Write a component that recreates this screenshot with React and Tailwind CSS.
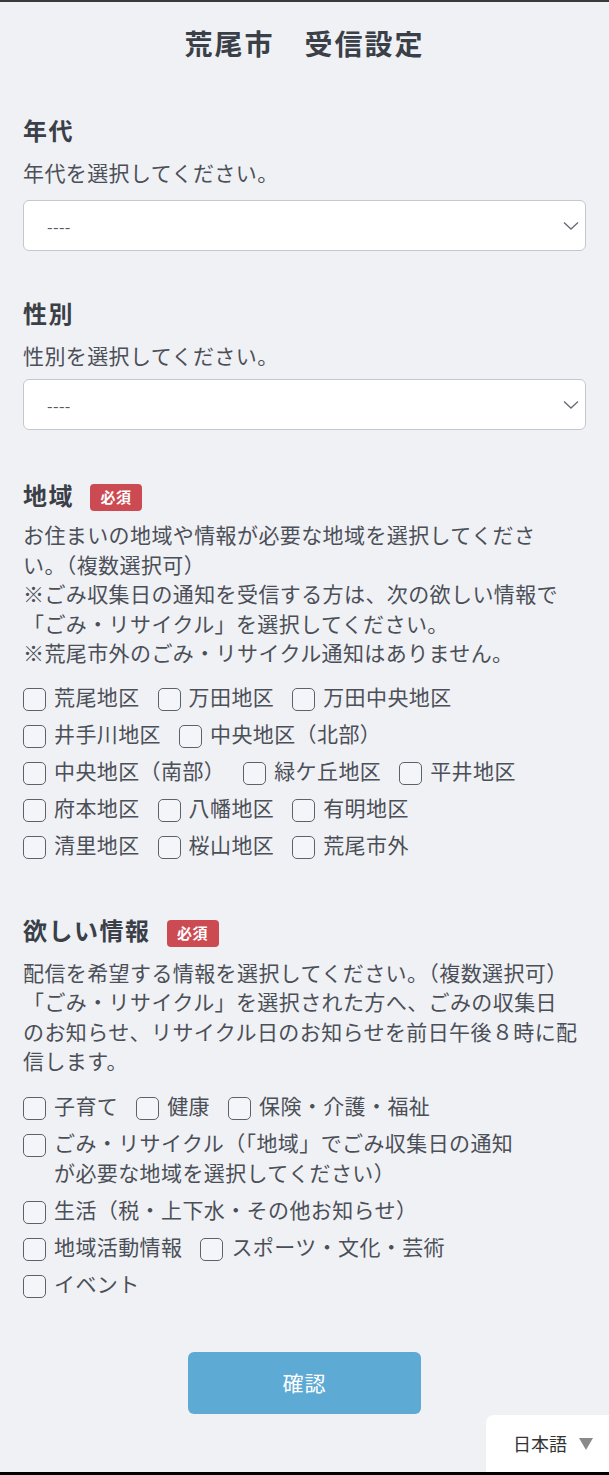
import React from "react";

const FONT = { fontFamily: '"Noto Sans CJK JP", "Noto Sans", sans-serif' };

const AREAS = [
  ["荒尾地区", "万田地区", "万田中央地区"],
  ["井手川地区", "中央地区（北部）"],
  ["中央地区（南部）", "緑ケ丘地区", "平井地区"],
  ["府本地区", "八幡地区", "有明地区"],
  ["清里地区", "桜山地区", "荒尾市外"],
];

const INFOS = [
  [["子育て"], ["健康"], ["保険・介護・福祉"]],
  [["ごみ・リサイクル（「地域」でごみ収集日の通知", "が必要な地域を選択してください）"]],
  [["生活（税・上下水・その他お知らせ）"]],
  [["地域活動情報"], ["スポーツ・文化・芸術"]],
  [["イベント"]],
];

const Checkbox = () => (
  <span className="mt-[7px] block h-[23px] w-[23px] shrink-0 rounded-[5px] border-[1.5px] border-[#5d626a] bg-[#f4f5f8]" />
);

const CheckItem = ({ lines }) => (
  <label className="mr-[18px] flex items-start">
    <Checkbox />
    <span className="ml-[8px] leading-[30px]">
      {lines.map((l, i) => (
        <React.Fragment key={i}>
          {i > 0 && <br />}
          {l}
        </React.Fragment>
      ))}
    </span>
  </label>
);

const Heading = ({ children, required, className = "" }) => (
  <div className={`flex items-center ${className}`}>
    <h2 className="text-[24px] font-bold leading-[32px] tracking-[1.5px] text-[#3a3f48]">{children}</h2>
    {required && (
      <span className="ml-[16px] mt-[6px] flex h-[27px] w-[52px] items-center justify-center rounded-[4px] bg-[#cc4b52] text-[15px] font-bold text-white">
        必須
      </span>
    )}
  </div>
);

const SelectBox = ({ className = "" }) => (
  <div className={`flex h-[51px] items-center justify-between rounded-[6px] border border-[#c4c8ce] bg-white pl-[23px] pr-[6px] ${className}`}>
    <span className="text-[16px] text-[#555a60]">----</span>
    <svg width="16" height="10" viewBox="0 0 16 10">
      <polyline points="1,1.5 8,8 15,1.5" fill="none" stroke="#666b72" strokeWidth="1.3" />
    </svg>
  </div>
);

export default function App() {
  return (
    <div
      style={FONT}
      className="relative h-[1475px] w-full overflow-hidden border-t-2 border-b-[3px] border-t-[#3a3a3a] border-b-black bg-[#f0f1f5] text-[21px] tracking-[0.4px] text-[#4b4f57]"
    >
      <h1 className="pt-[21px] text-center text-[28px] font-bold leading-[40px] tracking-[2px] text-[#3a3f48]">
        荒尾市　受信設定
      </h1>

      <div className="px-[23px]">
        <Heading className="mt-[51px]">年代</Heading>
        <p className="mt-[11px] leading-[30px]">年代を選択してください。</p>
        <SelectBox className="mt-[13px]" />

        <Heading className="mt-[46px]">性別</Heading>
        <p className="mt-[11px] leading-[30px]">性別を選択してください。</p>
        <SelectBox className="mt-[9px]" />

        <Heading className="mt-[48px]" required>
          地域
        </Heading>
        <p className="mt-[9px] leading-[29.5px]">
          お住まいの地域や情報が必要な地域を選択してくださ
          <br />
          い。（複数選択可）
          <br />
          ※ごみ収集日の通知を受信する方は、次の欲しい情報で
          <br />
          「ごみ・リサイクル」を選択してください。
          <br />
          ※荒尾市外のごみ・リサイクル通知はありません。
        </p>
        <div className="mt-[13px] flex flex-col gap-y-[7px]">
          {AREAS.map((row, i) => (
            <div key={i} className="flex">
              {row.map((a) => (
                <CheckItem key={a} lines={[a]} />
              ))}
            </div>
          ))}
        </div>

        <Heading className="mt-[55px]" required>
          欲しい情報
        </Heading>
        <p className="mt-[11px] leading-[29.5px]">
          配信を希望する情報を選択してください。（複数選択可）
          <br />
          「ごみ・リサイクル」を選択された方へ、ごみの収集日
          <br />
          のお知らせ、リサイクル日のお知らせを前日午後８時に配
          <br />
          信します。
        </p>
        <div className="mt-[14px] flex flex-col gap-y-[7px]">
          {INFOS.map((row, i) => (
            <div key={i} className="flex">
              {row.map((lines) => (
                <CheckItem key={lines[0]} lines={lines} />
              ))}
            </div>
          ))}
        </div>

        <div className="mt-[54px] flex justify-center">
          <button className="h-[62px] w-[233px] rounded-[6px] bg-[#5daad5] text-[21px] tracking-[1px] text-white">
            確認
          </button>
        </div>
      </div>

      <div className="absolute bottom-0 right-0 flex h-[57px] w-[123px] items-center rounded-tl-[8px] bg-white pl-[27px]">
        <span className="text-[18px] tracking-normal text-[#333]">日本語</span>
        <svg width="14" height="12" viewBox="0 0 14 12" className="ml-[12px]">
          <polygon points="0,0 14,0 7,12" fill="#8a8a8a" />
        </svg>
      </div>
    </div>
  );
}
